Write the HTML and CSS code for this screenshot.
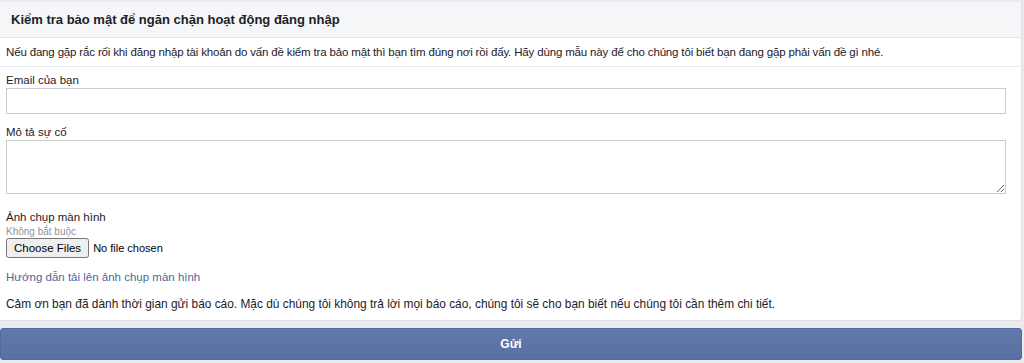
FILE: index.html
```html
<!DOCTYPE html>
<html lang="vi">
<head>
    <meta charset="UTF-8">
    <meta name="viewport" content="width=device-width, initial-scale=1.0">
    <title>Kiểm tra bảo mật</title>
    <link rel="stylesheet" href="styles.css">
</head>
<body>
    <div class="page">
        <form class="report-card">
            <div class="report-header">Kiểm tra bảo mật để ngăn chặn hoạt động đăng nhập</div>
            <div class="report-intro">Nếu đang gặp rắc rối khi đăng nhập tài khoản do vấn đề kiểm tra bảo mật thì bạn tìm đúng nơi rồi đấy. Hãy dùng mẫu này để cho chúng tôi biết bạn đang gặp phải vấn đề gì nhé.</div>
            <div class="report-body">
                <div class="field">
                    <label class="field-label" for="email">Email của bạn</label>
                    <input class="field-input" type="text" id="email">
                </div>
                <div class="field">
                    <label class="field-label" for="desc">Mô tả sự cố</label>
                    <textarea class="field-textarea" id="desc"></textarea>
                </div>
                <div class="field field-files">
                    <label class="field-label" for="shots">Ảnh chụp màn hình</label>
                    <div class="field-hint">Không bắt buộc</div>
                    <input class="field-file" type="file" id="shots" multiple>
                </div>
                <a class="help-link" href="#">Hướng dẫn tải lên ảnh chụp màn hình</a>
                <p class="thanks">Cảm ơn bạn đã dành thời gian gửi báo cáo. Mặc dù chúng tôi không trả lời mọi báo cáo, chúng tôi sẽ cho bạn biết nếu chúng tôi cần thêm chi tiết.</p>
            </div>
        </form>
        <button class="send-btn" type="button">Gửi</button>
    </div>
</body>
</html>
```

FILE: styles.css
```css
body {
    margin: 0;
    padding: 0;
    background-color: #e9ebee;
    font-family: "Liberation Sans", Arial, sans-serif;
    font-size: 12px;
    color: #1d2129;
}
.page {
    padding: 2px 2px 0 0;
}
.report-card {
    background-color: #fff;
    border: 1px solid #dddfe2;
    border-left: none;
    border-top: none;
    border-radius: 0 3px 3px 0;
    display: block;
}
.report-header {
    background-color: #f5f6f7;
    border-bottom: 1px solid #e5e5e5;
    padding: 0 11px;
    height: 35px;
    line-height: 35px;
    font-size: 13px;
    font-weight: bold;
}
.report-intro {
    padding: 7px 6px 6px;
    line-height: 15px;
    font-size: 11.5px;
    letter-spacing: -0.16px;
    border-bottom: 1px solid #e9ebee;
}
.report-body {
    padding: 6px 15px 8px 6px;
}
.field {
    display: flex;
    flex-direction: column;
    margin-bottom: 11px;
}
.field-label {
    line-height: 15px;
    font-size: 11.5px;
}
.field-input {
    height: 26px;
    box-sizing: border-box;
    border: 1px solid #ccc;
    margin: 0;
    font-family: inherit;
}
.field-textarea {
    height: 54px;
    box-sizing: border-box;
    border: 1px solid #ccc;
    margin: 0;
    resize: vertical;
    font-family: inherit;
}
.field-files {
    margin-top: 16px;
    margin-bottom: 12px;
}
.field-hint {
    font-size: 10px;
    color: #90949c;
    line-height: 13px;
}
.field-file {
    font-family: "Liberation Sans", Arial, sans-serif;
    font-size: 11px;
    color: #000;
    align-self: flex-start;
}
.field-file::file-selector-button {
    padding: 2px 6px;
    font-family: inherit;
    font-size: 11.5px;
}
.help-link {
    display: block;
    color: #4b67a1;
    text-decoration: none;
    line-height: 15px;
    font-size: 11.5px;
}
.thanks {
    margin: 12px 0 0;
    line-height: 15px;
    font-size: 11.9px;
}
.send-btn {
    display: block;
    width: 100%;
    margin-top: 7px;
    height: 32px;
    border: 1px solid #4c6aa3;
    border-radius: 3px;
    background: linear-gradient(#6279ab, #586fa1);
    color: #fff;
    font-family: "Liberation Sans", Arial, sans-serif;
    font-size: 12px;
    font-weight: bold;
    cursor: pointer;
}
```
